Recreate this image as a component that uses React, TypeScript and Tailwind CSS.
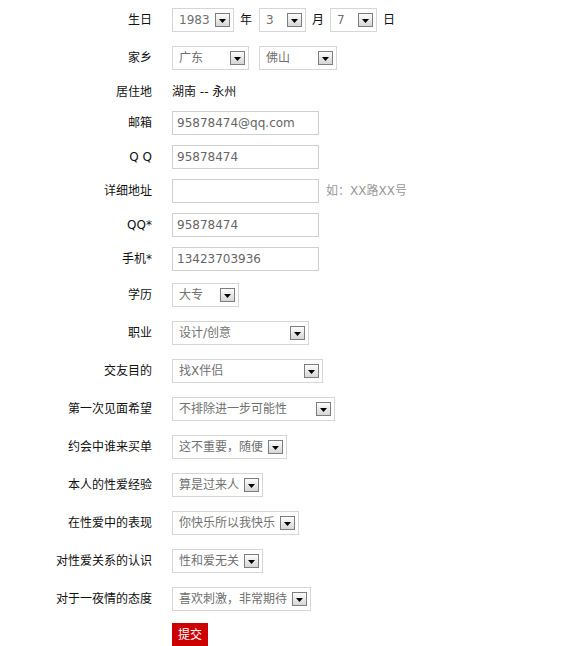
import React from "react";

// Profile form: labels right-aligned at 152px, fields start at 172px.

function DropButton() {
  return (
    <span className="flex h-[14px] w-[15px] shrink-0 items-center justify-center border border-[#7d7d7d] bg-linear-to-b from-[#fdfdfd] to-[#d6d6d6]">
      <svg width="7" height="4" viewBox="0 0 7 4" className="mt-[2px]" aria-hidden="true">
        <path d="M0 0h7L3.5 4z" fill="#000" />
      </svg>
    </span>
  );
}

function Select({ value, className }: { value: string; className: string }) {
  return (
    <div
      className={`flex h-[24px] items-center justify-between border border-[#d6d6d6] bg-white pl-[6px] pr-[3px] text-[12px] text-[#707070] ${className}`}
    >
      <span className="whitespace-nowrap">{value}</span>
      <DropButton />
    </div>
  );
}

function Input({ value }: { value: string }) {
  return (
    <input
      readOnly
      value={value}
      className="h-[24px] w-[147px] border border-[#cfcfcf] bg-white px-[4px] text-[12px] text-[#666] outline-none"
    />
  );
}

function Row({
  label,
  height,
  children,
}: {
  label: string;
  height: string;
  children: React.ReactNode;
}) {
  return (
    <div className={`flex items-center ${height}`}>
      <div className="w-[152px] shrink-0 whitespace-nowrap text-right text-[12px] text-[#111]">
        {label}
      </div>
      <div className="ml-[20px] flex items-center text-[12px] text-[#111]">{children}</div>
    </div>
  );
}

const selectRows: { label: string; value: string; width: string }[] = [
  { label: "学历", value: "大专", width: "w-[67px]" },
  { label: "职业", value: "设计/创意", width: "w-[137px]" },
  { label: "交友目的", value: "找X伴侣", width: "w-[151px]" },
  { label: "第一次见面希望", value: "不排除进一步可能性", width: "w-[163px]" },
  { label: "约会中谁来买单", value: "这不重要，随便", width: "w-[115px]" },
  { label: "本人的性爱经验", value: "算是过来人", width: "w-[91px]" },
  { label: "在性爱中的表现", value: "你快乐所以我快乐", width: "w-[127px]" },
  { label: "对性爱关系的认识", value: "性和爱无关", width: "w-[91px]" },
  { label: "对于一夜情的态度", value: "喜欢刺激，非常期待", width: "w-[139px]" },
];

export default function App() {
  return (
    <div className="min-h-[646px] w-[569px] bg-white pt-[1px] font-['DejaVu_Sans','Noto_Sans_CJK_SC',sans-serif]">
      <Row label="生日" height="h-[38px]">
        <Select value="1983" className="w-[62px]" />
        <span className="ml-[6px]">年</span>
        <Select value="3" className="ml-[7px] w-[47px]" />
        <span className="ml-[6px]">月</span>
        <Select value="7" className="ml-[6px] w-[47px]" />
        <span className="ml-[6px]">日</span>
      </Row>
      <Row label="家乡" height="h-[38px]">
        <Select value="广东" className="w-[77px]" />
        <Select value="佛山" className="ml-[10px] w-[78px]" />
      </Row>
      <Row label="居住地" height="h-[29px]">
        <span>湖南 -- 永州</span>
      </Row>
      <Row label="邮箱" height="h-[34px]">
        <Input value="95878474@qq.com" />
      </Row>
      <Row label="Q Q" height="h-[34px]">
        <Input value="95878474" />
      </Row>
      <Row label="详细地址" height="h-[34px]">
        <Input value="" />
        <span className="ml-[7px] whitespace-nowrap text-[#999]">如：XX路XX号</span>
      </Row>
      <Row label="QQ*" height="h-[34px]">
        <Input value="95878474" />
      </Row>
      <Row label="手机*" height="h-[34px]">
        <Input value="13423703936" />
      </Row>
      {selectRows.map((r) => (
        <Row key={r.label} label={r.label} height="h-[38px]">
          <Select value={r.value} className={r.width} />
        </Row>
      ))}
      <Row label="" height="h-[34px]">
        <button
          type="button"
          className="flex h-[24px] w-[36px] items-center justify-center bg-[#cc0000] text-[12px] text-white"
        >
          提交
        </button>
      </Row>
    </div>
  );
}
